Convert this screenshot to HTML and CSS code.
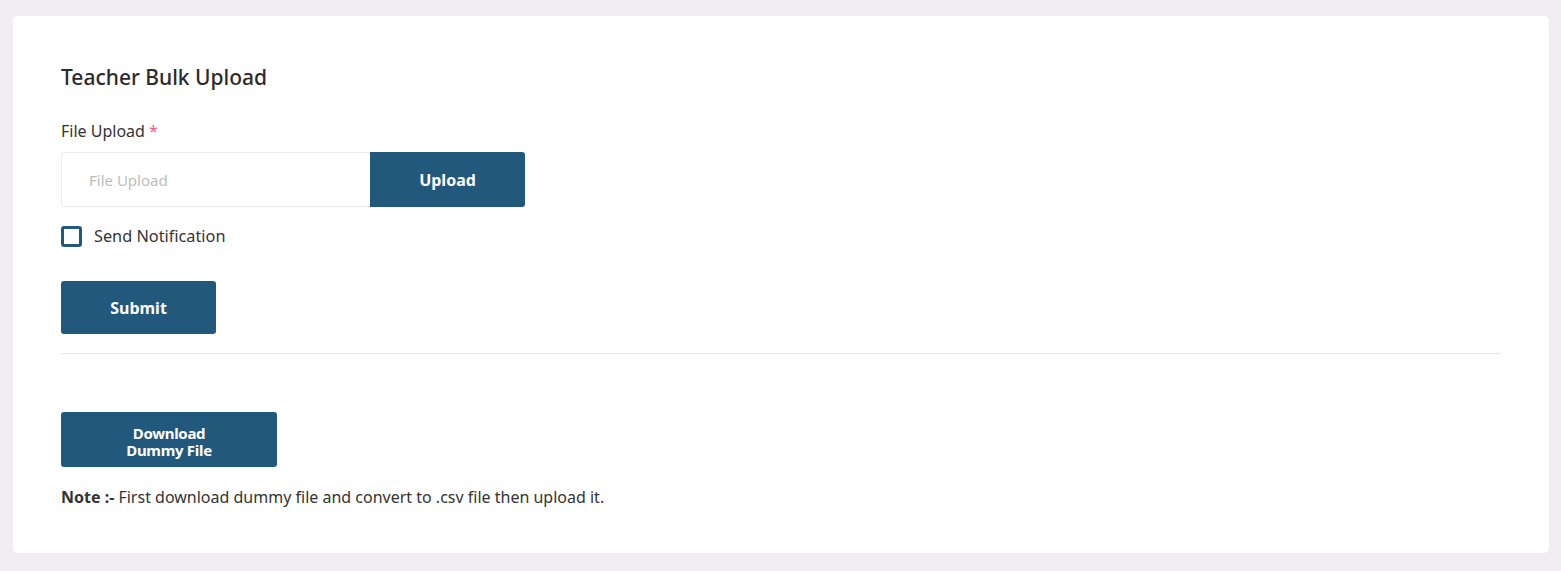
FILE: index.html
```html
<!DOCTYPE html>
<html lang="en">
<head>
<meta charset="utf-8">
<title>Teacher Bulk Upload</title>
<link rel="stylesheet" href="styles.css">
</head>
<body>
<main class="page">
  <section class="card">
    <h1 class="title">Teacher Bulk Upload</h1>
    <div class="field">
      <label class="label" for="file">File Upload <span class="req">*</span></label>
      <div class="upload-group">
        <input id="file" class="file-input" type="text" placeholder="File Upload">
        <button class="btn btn-upload" type="button">Upload</button>
      </div>
    </div>
    <label class="check">
      <span class="box"></span>
      <span class="check-text">Send Notification</span>
    </label>
    <button class="btn btn-submit" type="button">Submit</button>
    <hr class="divider">
    <button class="btn btn-download" type="button">Download<br>Dummy File</button>
    <p class="note"><strong>Note :-</strong> First download dummy file and convert to .csv file then upload it.</p>
  </section>
</main>
</body>
</html>
```
FILE: styles.css
```css
html, body {
  margin: 0;
  padding: 0;
  background: #f1ecf2;
}
body {
  font-family: "Noto Sans", "Open Sans", sans-serif;
  color: #333;
}
.page {
  padding: 16px 12px 18px 13px;
}
.card {
  background: #fff;
  border-radius: 5px;
  padding: 46px 48px 42px 48px;
  display: flex;
  flex-direction: column;
  align-items: flex-start;
  height: 537px;
  box-sizing: border-box;
}
.title {
  margin: 0;
  font-size: 21px;
  font-weight: 500;
  line-height: 30px;
  color: #2b2b2b;
}
.field {
  margin-top: 29px;
  display: flex;
  flex-direction: column;
}
.label {
  font-size: 16px;
  line-height: 20px;
  color: #333;
}
.req { color: #e8647a; }
.upload-group {
  display: flex;
  margin-top: 11px;
}
.file-input {
  width: 309px;
  height: 55px;
  box-sizing: border-box;
  border: 1px solid #ececec;
  border-right: none;
  border-radius: 3px 0 0 3px;
  padding: 0 27px;
  font-family: inherit;
  font-size: 15px;
  color: #333;
  outline: none;
}
.file-input::placeholder { color: #bdbdbd; }
.btn {
  background: #22587b;
  color: #fff;
  border: none;
  font-family: inherit;
  font-weight: 700;
  cursor: pointer;
}
.btn-upload {
  width: 155px;
  height: 55px;
  border-radius: 0 3px 3px 0;
  font-size: 16px;
}
.check {
  display: flex;
  align-items: center;
  margin-top: 18px;
  gap: 12px;
}
.box {
  width: 21px;
  height: 21px;
  box-sizing: border-box;
  border: 3px solid #22587b;
  border-radius: 3px;
}
.check-text {
  font-size: 16.3px;
  line-height: 22px;
  color: #333;
}
.btn-submit {
  margin-top: 34px;
  width: 155px;
  height: 53px;
  border-radius: 3px;
  font-size: 16px;
}
.divider {
  align-self: stretch;
  margin: 19px 0 0 0;
  border: none;
  border-top: 1px solid #e6e6e6;
}
.btn-download {
  margin-top: 58px;
  width: 216px;
  height: 55px;
  border-radius: 3px;
  font-size: 15px;
  line-height: 17px;
  padding-top: 6px;
  letter-spacing: -0.3px;
}
.note {
  margin: 20px 0 0 0;
  font-size: 16px;
  line-height: 20px;
  color: #333;
}
.note strong { font-weight: 700; }
```
